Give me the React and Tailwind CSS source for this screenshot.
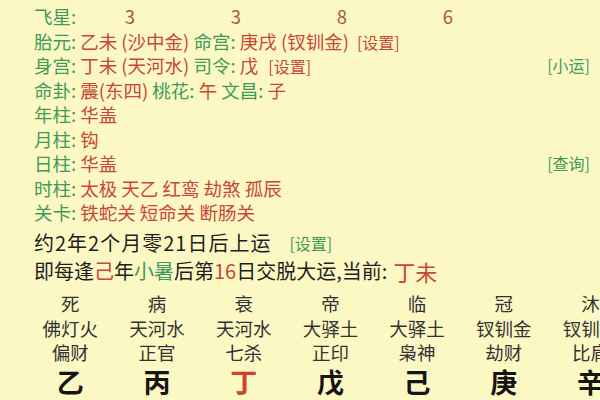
const green = 'text-[#3f9a5c]'
const red = 'text-[#c8463a]'

const flyStars = ['3', '3', '8', '6']

const columns = [
  { state: '死', nayin: '佛灯火', god: '偏财', stem: '乙' },
  { state: '病', nayin: '天河水', god: '正官', stem: '丙' },
  { state: '衰', nayin: '天河水', god: '七杀', stem: '丁', hot: true },
  { state: '帝', nayin: '大驿土', god: '正印', stem: '戊' },
  { state: '临', nayin: '大驿土', god: '枭神', stem: '己' },
  { state: '冠', nayin: '钗钏金', god: '劫财', stem: '庚' },
  { state: '沐', nayin: '钗钏金', god: '比肩', stem: '辛' },
]

function Row({ label, children, right }) {
  return (
    <div className="flex h-[24.5px] items-center whitespace-nowrap">
      <span className={green}>{label}: </span>
      <span className="ml-[4px] flex-1">{children}</span>
      {right && <span className={`${green} text-[16px]`}>{right}</span>}
    </div>
  )
}

export default function App() {
  return (
    <div
      className="h-[400px] w-[600px] overflow-hidden bg-[#fcf8c3] pt-[4px] text-[18.5px] leading-none"
      style={{ fontFamily: '"Noto Sans CJK SC", "Noto Sans", sans-serif' }}
    >
      <div className="pl-[34px] pr-[10px]">
        <div className="flex h-[24.5px] items-center">
          <span className={`${green} w-[43px]`}>飞星:</span>
          {flyStars.map((n, i) => (
            <span key={i} className="w-[106px] text-center text-[#a85a3c]">{n}</span>
          ))}
        </div>
        <Row label="胎元">
          <span className={red}>乙未 (沙中金)</span>
          <span className={green}> 命宫: </span>
          <span className={red}>庚戌 (钗钏金)</span>
          <span className={`${red} ml-[8px] text-[16px]`}>[设置]</span>
        </Row>
        <Row label="身宫" right="[小运]">
          <span className={red}>丁未 (天河水)</span>
          <span className={green}> 司令: </span>
          <span className={red}>戊</span>
          <span className={`${red} ml-[10px] text-[16px]`}>[设置]</span>
        </Row>
        <Row label="命卦">
          <span className={red}>震(东四)</span>
          <span className={green}> 桃花: </span>
          <span className={red}>午 </span>
          <span className={green}>文昌: </span>
          <span className={red}>子</span>
        </Row>
        <Row label="年柱"><span className={red}>华盖</span></Row>
        <Row label="月柱"><span className={red}>钩</span></Row>
        <Row label="日柱" right="[查询]"><span className={red}>华盖</span></Row>
        <Row label="时柱"><span className={red}>太极 天乙 红鸾 劫煞 孤辰</span></Row>
        <Row label="关卡"><span className={red}>铁蛇关 短命关 断肠关</span></Row>

        <div className="mt-[4.5px] flex h-[28px] items-center whitespace-nowrap text-[20px] text-[#1e1e1e]">
          <span className="tracking-[1px]">约2年2个月零21日后上运</span>
          <span className={`${green} ml-[18px] text-[16px]`}>[设置]</span>
        </div>
        <div className="flex h-[28px] items-center whitespace-nowrap text-[20px] text-[#1e1e1e]">
          <span>即每逢</span>
          <span className={red}>己</span>
          <span>年</span>
          <span className={green}>小暑</span>
          <span>后第</span>
          <span className={red}>16</span>
          <span>日交脱大运,当前: </span>
          <span className={`${red} ml-[6px] text-[22px]`}>丁未</span>
        </div>
      </div>

      <div className="mt-[6px] flex pl-[27px]">
        {columns.map((c, i) => (
          <div key={i} className="flex w-[86.7px] shrink-0 flex-col items-center whitespace-nowrap text-[#333]">
            <div className="flex h-[24.5px] items-center">{c.state}</div>
            <div className="flex h-[24.5px] items-center">{c.nayin}</div>
            <div className="flex h-[24.5px] items-center">{c.god}</div>
            <div className={`flex h-[34px] items-center text-[27px] font-semibold ${c.hot ? 'text-[#d0412f]' : 'text-[#151515]'}`}>
              {c.stem}
            </div>
          </div>
        ))}
      </div>
    </div>
  )
}
